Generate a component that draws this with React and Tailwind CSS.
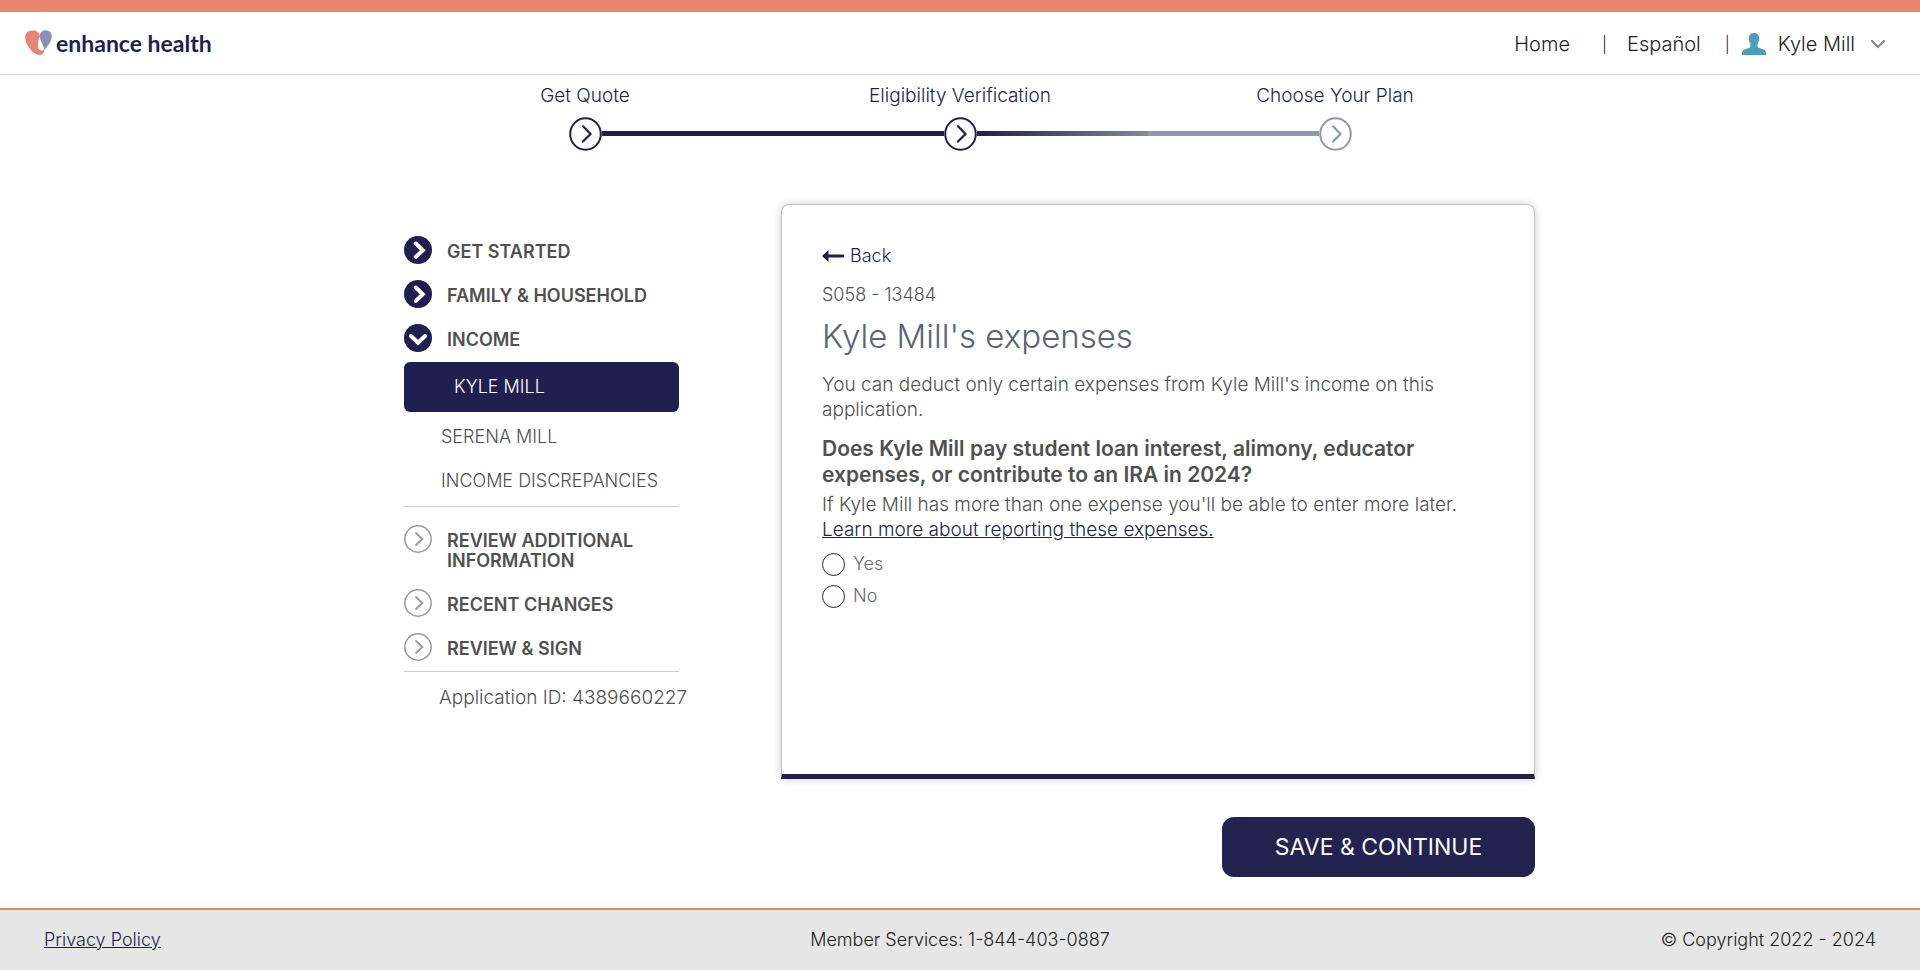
import React, { useState } from "react";

const steps = [
  { label: "Get Quote", done: true },
  { label: "Eligibility Verification", done: true },
  { label: "Choose Your Plan", done: false },
];

function HeartLogo() {
  return (
    <svg width="27" height="26" viewBox="0 0 27 26" aria-hidden="true">
      <path d="M0.200 7.500C0.200 3 3.300.5 7.500.5c4.200 0 7 2 7.400 5.900C13.200 9.500 12.500 13.500 13 16.800c.4 2.600 1.900 4 4 3.600 1 0 1.700-.6 2.200-1.300.4 3.200-1.300 6-4.200 6-3.500 0-7.200-2.700-10-6.100C2.300 15.500.2 12 .2 7.500z" fill="#e68570" />
      <path d="M20.500.2c3.700 0 6.200 2.200 6.200 6.200 0 5-3.400 9-7.500 13.600-.2-4.700-3.600-8-4.300-12.500C14.400 3.600 16.800.2 20.500.2z" fill="#8a90b5" />
    </svg>
  );
}

function PersonIcon() {
  return (
    <svg width="24" height="22" viewBox="0 0 24 22" aria-hidden="true" className="shrink-0">
      <path d="M12 0c3.200 0 5.200 1.800 5.200 5.200 0 2-.4 3.700-1.600 5.300v2.800c0 .9.500 1.300 1.400 1.600l3.600 1.200c2.200.7 3.400 2 3.400 4V22H0v-1.900c0-2 1.200-3.300 3.400-4L7 14.900c.9-.3 1.400-.7 1.400-1.600v-2.800C7.200 8.900 6.800 7.200 6.800 5.200 6.800 1.800 8.800 0 12 0z" fill="#4a9fba" />
    </svg>
  );
}

function StepCircle({ done }) {
  const color = done ? "#211f4f" : "#8f99a5";
  return (
    <svg width="33" height="35" viewBox="0 0 33 35" fill="none" aria-hidden="true">
      <ellipse cx="16.500" cy="18" rx="15.300" ry="15.800" fill="#fff" stroke={color} strokeWidth="2" />
      <path d="M14 10.300l7.500 7.700L14 25.600" stroke={color} strokeWidth="2.200" strokeLinecap="round" />
    </svg>
  );
}

function NavIcon({ kind }) {
  if (kind === "todo") {
    return (
      <svg width="28" height="28" viewBox="0 0 28 28" fill="none" aria-hidden="true" className="shrink-0">
        <circle cx="14" cy="14" r="13.200" stroke="#999" strokeWidth="1.500" />
        <path d="M12 8l6.500 6-6.500 6" stroke="#999" strokeWidth="1.800" strokeLinecap="round" />
      </svg>
    );
  }
  return (
    <svg width="28" height="28" viewBox="0 0 28 28" fill="none" aria-hidden="true" className="shrink-0">
      <circle cx="14" cy="14" r="14" fill="#211f4f" />
      <path
        d={kind === "open" ? "M7 12l7 6.800 7-6.800" : "M11.800 7.500l7 6.700-7 6.700"}
        stroke="#fff"
        strokeWidth="4"
        strokeLinecap="round"
      />
    </svg>
  );
}

function Section({ kind, children }) {
  return (
    <a href="#section" className="flex gap-[15px] text-[18px] leading-5 font-semibold text-[#505050]">
      <NavIcon kind={kind} />
      <span className="pt-[6px]">{children}</span>
    </a>
  );
}

function Choice({ value, selected, onSelect }) {
  return (
    <label className="flex items-center gap-2 text-[18px] leading-6 font-light text-[#6b6b6b]">
      <input
        type="radio"
        name="expense"
        value={value}
        checked={selected === value}
        onChange={() => onSelect(value)}
        className="size-[23px] appearance-none rounded-full border border-[#211f4f] bg-white checked:border-[6px]"
      />
      {value}
    </label>
  );
}

export default function App() {
  const [answer, setAnswer] = useState("");
  return (
    <div className="flex min-h-screen flex-col bg-white font-['Inter',sans-serif] text-[#505050]">
      <header className="flex h-[75px] items-center justify-between border-t-[12px] border-b border-t-[#e68570] border-b-[#d5d5d5] pr-[35px] pl-[25px]">
        <a href="#home" className="flex items-center gap-1 font-['Lato',sans-serif] text-[23px] leading-7 font-bold text-[#211f4f]">
          <HeartLogo />
          <span>enhance health</span>
        </a>
        <nav className="flex items-center pt-[2px] text-[20px] leading-6 font-light text-[#222]">
          <a href="#home">Home</a>
          <span className="pr-5 pl-8 text-[16px]">|</span>
          <a href="#es">Español</a>
          <span className="pr-3 pl-6 text-[16px]">|</span>
          <button type="button" className="flex items-center">
            <PersonIcon />
            <span className="pr-4 pl-3">Kyle Mill</span>
            <svg width="14" height="9" viewBox="0 0 14 9" fill="none" aria-hidden="true">
              <path d="M1 1l6 6 6-6" stroke="#888" strokeWidth="2.200" strokeLinecap="round" />
            </svg>
          </button>
        </nav>
      </header>

      <ol className="mx-auto grid w-full max-w-[1125px] grid-cols-3 pt-2">
        {steps.map((s, i) => (
          <li key={s.label} className="flex flex-col items-center gap-[7px]">
            <span className="text-[19px] leading-[26px] font-light text-[#211f4f]">{s.label}</span>
            <div className="flex w-full items-center">
              <span className={i === 0 ? "h-[5px] flex-1" : i === 1 ? "h-[5px] flex-1 bg-[#211f4f]" : "h-[5px] flex-1 bg-[#8f99a5]"} />
              <StepCircle done={s.done} />
              <span className={i === 0 ? "h-[5px] flex-1 bg-[#211f4f]" : i === 1 ? "h-[5px] flex-1 bg-linear-to-r from-[#211f4f] to-[#838b93]" : "h-[5px] flex-1"} />
            </div>
          </li>
        ))}
      </ol>

      <main className="mx-auto flex w-full max-w-[1150px] justify-between pt-[53px] pb-[31px] pl-[19px]">
        <aside className="w-[275px] pt-8">
          <nav className="flex flex-col">
            <div className="flex flex-col gap-4 pb-[10px]">
              <Section kind="done">GET STARTED</Section>
              <Section kind="done">FAMILY &amp; HOUSEHOLD</Section>
              <Section kind="open">INCOME</Section>
            </div>
            <div className="flex flex-col border-b border-[#ccc] pb-[13px] text-[18px] leading-6 font-light whitespace-nowrap">
              <a href="#kyle" className="rounded-md bg-[#211f4f] py-[13px] pl-[50px] text-white">KYLE MILL</a>
              <a href="#serena" className="pt-[13px] pl-[37px]">SERENA MILL</a>
              <a href="#discrepancies" className="pt-5 pl-[37px]">INCOME DISCREPANCIES</a>
            </div>
            <div className="flex flex-col gap-4 border-b border-[#ccc] pt-[18px] pb-[10px]">
              <div className="pb-[2px]">
                <Section kind="todo">REVIEW ADDITIONAL INFORMATION</Section>
              </div>
              <Section kind="todo">RECENT CHANGES</Section>
              <Section kind="todo">REVIEW &amp; SIGN</Section>
            </div>
          </nav>
          <p className="pt-[14px] pl-[35px] text-[19px] leading-6 font-light whitespace-nowrap">Application ID: 4389660227</p>
        </aside>

        <div className="flex w-[754px] flex-col items-end gap-[38px]">
          <section className="flex min-h-[575px] w-full flex-col items-start rounded-t-lg border border-b-[5px] border-[#c4c4c4] border-b-[#211f4f] px-10 pt-[38px] text-[19px] leading-[25px] font-light shadow-[0_0_8px_rgba(0,0,0,0.2)]">
            <a href="#back" className="flex items-center gap-[6px] text-[18px] text-[#211f4f]">
              <svg width="22" height="12" viewBox="0 0 22 12" aria-hidden="true">
                <path d="M0 6l6.500-6v4.500H22v3H6.500V12z" fill="#211f4f" />
              </svg>
              Back
            </a>
            <p className="pt-[14px] text-[18px]">S058 - 13484</p>
            <h1 className="pt-[9px] text-[33px] leading-10 text-[#5a6472]">Kyle Mill's expenses</h1>
            <p className="max-w-[660px] pt-4">You can deduct only certain expenses from Kyle Mill's income on this application.</p>
            <h2 className="max-w-[660px] pt-[14px] text-[21px] leading-[26px] font-semibold">
              Does Kyle Mill pay student loan interest, alimony, educator expenses, or contribute to an IRA in 2024?
            </h2>
            <p className="pt-1">If Kyle Mill has more than one expense you'll be able to enter more later.</p>
            <a href="#learn" className="text-[#211f4f] underline">Learn more about reporting these expenses.</a>
            <fieldset className="flex flex-col gap-2 pt-[10px]">
              <Choice value="Yes" selected={answer} onSelect={setAnswer} />
              <Choice value="No" selected={answer} onSelect={setAnswer} />
            </fieldset>
          </section>
          <button type="button" className="h-[60px] w-[313px] rounded-xl bg-[#24224f] text-[23px] font-normal text-white">SAVE &amp; CONTINUE</button>
        </div>
      </main>

      <footer className="mt-auto grid h-[62px] grid-cols-3 items-center border-t-2 border-[#e68570] bg-[#e6e6e6] px-11 text-[18px] leading-6 font-light text-[#222]">
        <a href="#privacy" className="justify-self-start text-[#211f4f] underline">Privacy Policy</a>
        <span className="justify-self-center">Member Services: 1-844-403-0887</span>
        <span className="justify-self-end">© Copyright 2022 - 2024</span>
      </footer>
    </div>
  );
}
